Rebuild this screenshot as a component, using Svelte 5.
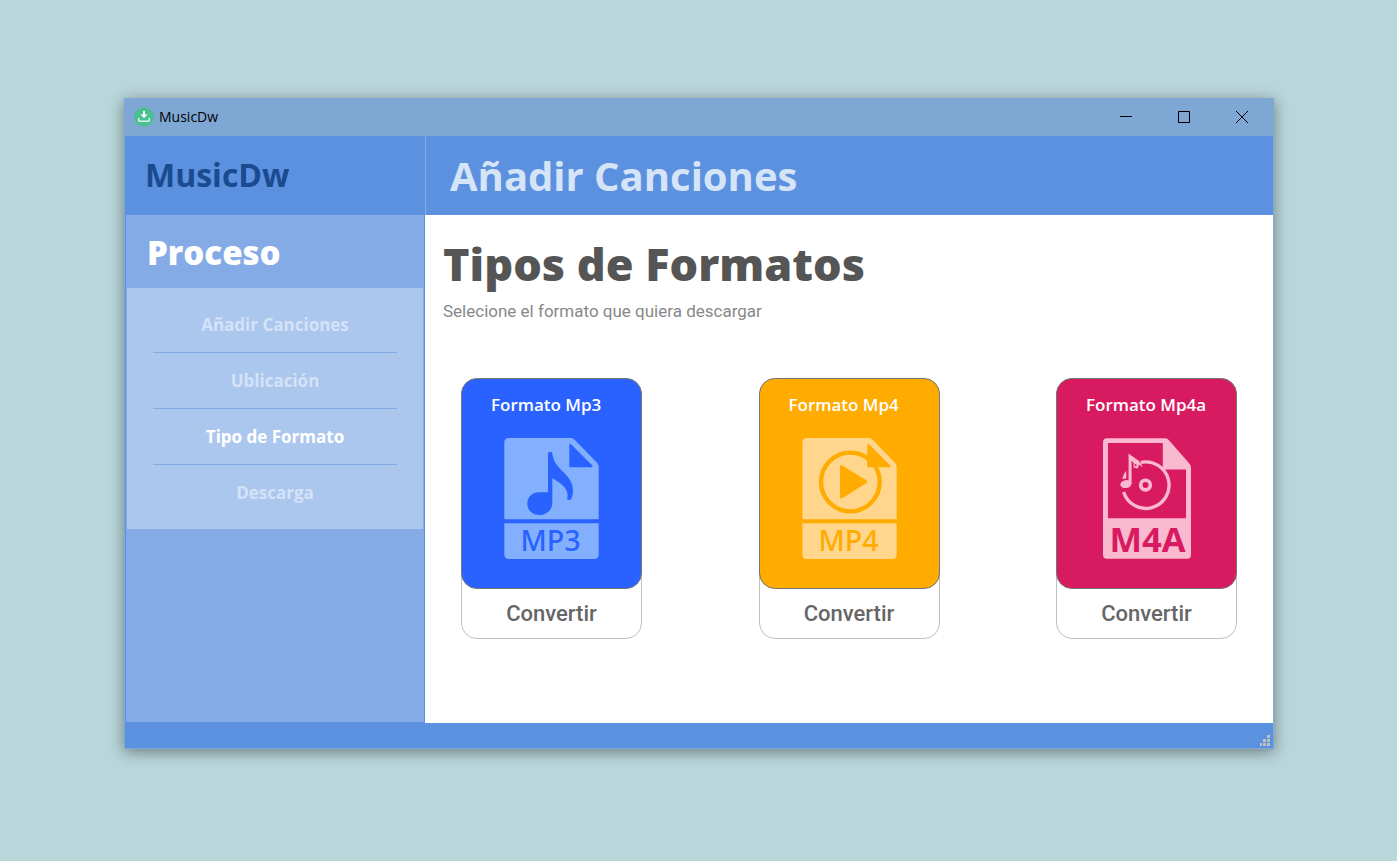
<script>
  const steps = ['Añadir Canciones', 'Ublicación', 'Tipo de Formato', 'Descarga'];
  let current = $state(2);

  const formats = [
    { id: 'mp3', label: 'Formato Mp3' },
    { id: 'mp4', label: 'Formato Mp4' },
    { id: 'm4a', label: 'Formato Mp4a' }
  ];
</script>

<div class="desktop">
  <div class="window">
    <div class="titlebar">
      <svg class="app-icon" viewBox="0 0 20 20" aria-hidden="true">
        <circle cx="10" cy="10" r="10" fill="#4bbf92" />
        <path d="M9 4h2v3.500h2.500L10 11 6.500 7.500H9z" fill="#fff" />
        <path d="M4.800 11.500v2.700h10.400v-2.700" fill="none" stroke="#d6f2e6" stroke-width="1.500" stroke-linecap="round" stroke-linejoin="round" />
      </svg>
      <span class="app-name">MusicDw</span>
      <div class="controls">
        <button aria-label="Minimizar">
          <svg viewBox="0 0 12 12"><path d="M0 5.500h12" /></svg>
        </button>
        <button aria-label="Maximizar">
          <svg viewBox="0 0 12 12"><path d="M.5.5h11v11H.5z" /></svg>
        </button>
        <button aria-label="Cerrar">
          <svg viewBox="0 0 12 12"><path d="M0 0l12 12M12 0L0 12" /></svg>
        </button>
      </div>
    </div>

    <header>
      <div class="brand">MusicDw</div>
      <div class="section">Añadir Canciones</div>
    </header>

    <div class="body">
      <aside>
        <h2>Proceso</h2>
        <nav>
          {#each steps as step, i}
            <button class:active={i === current} onclick={() => (current = i)}>{step}</button>
          {/each}
        </nav>
      </aside>

      <main>
        <h1>Tipos de Formatos</h1>
        <p>Selecione el formato que quiera descargar</p>
        <div class="cards">
          {#each formats as f}
            <article class="card">
              <div class="face {f.id}">
                <h3>{f.label}</h3>
                {#if f.id === 'm4a'}
                  <svg viewBox="0 0 265 363" width="88" height="121" aria-hidden="true">
                    <path class="paper" d="M12 0H188Q194 0 198 5L260 76Q265 82 265 90V351Q265 363 253 363H12Q0 363 0 351V12Q0 0 12 0Z" />
                    <path class="ink" d="M15 14H180V94H250V241H15Z" />
                    <path class="groove" d="M114 73A70 70 0 1 1 62 162" stroke-width="10" />
                    <circle class="groove" cx="128" cy="141" r="14.500" stroke-width="11" />
                    <ellipse class="paper" cx="69" cy="138" rx="17" ry="12" transform="rotate(-10 69 138)" />
                    <path class="paper" d="M77 46L101 63Q114 70 119 87L108 79Q108 86 104 91L92 88V74L86 68V138H77Z" />
                    <path class="paper" d="M58 123Q60 108 70 98V121Z" />
                    <path class="ink" d="M95 76L103 81L96 85Z" />
                    <text class="ink" x="134" y="342" text-anchor="middle" font-size="104" font-weight="700">M4A</text>
                  </svg>
                {:else}
                  <svg viewBox="0 0 283 363" width="95" height="121" aria-hidden="true">
                    <path class="paper" d="M14 0H200Q206 0 211 5L278 74Q283 79 283 87V244H0V14Q0 0 14 0Z" />
                    <path class="paper" d="M0 256H283V349Q283 363 269 363H14Q0 363 0 349Z" />
                    <path class="ink" d="M195 21Q195 15 200 19L263 82Q267 88 260 88H195Z" />
                    {#if f.id === 'mp3'}
                      <path class="ink" d="M131 48Q131 41 138 41Q143 41 144 48C151 99 206 106 206 159Q206 170 201 182Q199 187 193 186Q187 185 189 178C195 151 164 132 144 121V194C144 216 126 231 105 231C84 231 69 217 69 197C69 177 84 163 105 163H131Z" />
                      <text class="ink label" x="139" y="338" text-anchor="middle" font-size="86">MP3</text>
                    {:else}
                      <circle class="ring" cx="144" cy="132" r="88" />
                      <path class="ink" d="M113 87Q113 78 121 83L191 126Q198 131 191 136L121 180Q113 184 113 176Z" />
                      <text class="ink label" x="139" y="338" text-anchor="middle" font-size="86">MP4</text>
                    {/if}
                  </svg>
                {/if}
              </div>
              <button class="convert">Convertir</button>
            </article>
          {/each}
        </div>
      </main>
    </div>

    <footer>
      <svg width="11" height="11" viewBox="0 0 11 11" fill="#c0c0c0" aria-hidden="true">
        <path d="M8 0h3v3H8zM4 4h3v3H4zM8 4h3v3H8zM1 8h2v3H1zM4 8h3v3H4zM8 8h3v3H8z" />
      </svg>
    </footer>
  </div>
</div>

<style>
  .desktop {
    box-sizing: border-box;
    display: flex;
    min-height: 100vh;
    padding: 98px 123px 112px 124px;
    background: #b9d6da;
    font-family: 'Open Sans', 'Noto Sans', sans-serif;
  }
  .window {
    flex: 1;
    display: flex;
    flex-direction: column;
    border: 1px solid #7fa8d9;
    background: #5c91df;
    box-shadow: 0 3px 14px rgba(0, 0, 0, 0.42);
  }
  button {
    padding: 0;
    border: 0;
    background: none;
    font-family: inherit;
    cursor: pointer;
  }
  h1, h2, h3, p {
    margin: 0;
  }
  .titlebar {
    box-sizing: border-box;
    display: flex;
    align-items: center;
    height: 37px;
    padding: 0 2px 1px 9px;
    background: #7fa7d4;
  }
  .app-icon {
    width: 20px;
    height: 20px;
    margin-right: 5px;
  }
  .app-name {
    font-size: 14px;
    line-height: 20px;
  }
  .controls {
    display: flex;
    align-self: stretch;
    margin-left: auto;
  }
  .controls button {
    display: grid;
    place-items: center;
    width: 58px;
  }
  .controls svg {
    width: 12px;
    height: 12px;
    overflow: visible;
    fill: none;
    stroke: #000;
  }
  header {
    display: flex;
    height: 79px;
    font-weight: 700;
  }
  .brand {
    box-sizing: border-box;
    width: 301px;
    padding-left: 20px;
    border-right: 1px solid #84abe6;
    color: #1a4a90;
    font-size: 32px;
    line-height: 77px;
  }
  .section {
    padding-left: 24px;
    color: #d6e4f8;
    font-size: 40px;
    line-height: 79px;
  }
  .body {
    flex: 1;
    display: flex;
  }
  aside {
    box-sizing: border-box;
    width: 300px;
    padding: 0 1px;
    border: solid #5c91df;
    border-width: 0 1px 1px;
    background: #84abe6;
  }
  h2 {
    padding: 2px 0 0 20px;
    color: #fff;
    font-size: 33px;
    line-height: 71px;
    font-weight: 800;
  }
  nav {
    display: flex;
    flex-direction: column;
    padding: 9px 26px 8px;
    background: #acc7ee;
  }
  nav button {
    height: 56px;
    border-bottom: 1px solid #84abe6;
    color: #d4e2f7;
    font-size: 17px;
    font-weight: 700;
  }
  nav button:last-child {
    border-bottom-color: transparent;
  }
  nav button.active {
    color: #fff;
  }
  main {
    flex: 1;
    padding: 20px 36px 0 18px;
    background: #fff;
  }
  h1 {
    padding-bottom: 2px;
    color: #555;
    font-size: 45px;
    line-height: 58px;
    font-weight: 800;
  }
  p {
    color: #888;
    font-family: Roboto, sans-serif;
    font-size: 17px;
    line-height: 32px;
  }
  .cards {
    display: flex;
    justify-content: space-between;
    margin: 51px 0 0 18px;
  }
  .card {
    display: flex;
    flex-direction: column;
    box-sizing: border-box;
    width: 181px;
    border: 1px solid #c0c0c0;
    border-radius: 16px;
  }
  .face {
    display: flex;
    flex-direction: column;
    align-items: center;
    box-sizing: border-box;
    height: 211px;
    margin: -1px -1px 0;
    padding-top: 13px;
    border: 1px solid #777;
    border-radius: 16px;
    background: var(--ink);
  }
  .mp3 {
    --ink: #2962ff;
    --paper: #82b0ff;
  }
  .mp4 {
    --ink: #ffab00;
    --paper: #ffd68c;
  }
  .m4a {
    --ink: #d81b60;
    --paper: #f9b9cf;
  }
  h3 {
    align-self: flex-start;
    margin-bottom: 20px;
    padding-left: 29px;
    color: #fff;
    font-size: 17px;
    line-height: 26px;
    font-weight: 600;
  }
  .face svg {
    overflow: visible;
  }
  .label {
    font-family: 'Noto Sans', sans-serif;
    font-weight: 500;
  }
  .paper {
    fill: var(--paper);
  }
  .ink {
    fill: var(--ink);
  }
  .ring {
    fill: none;
    stroke: var(--ink);
    stroke-width: 13;
  }
  .groove {
    fill: none;
    stroke: var(--paper);
  }
  .convert {
    height: 49px;
    color: #666;
    font-family: Roboto, sans-serif;
    font-size: 22px;
    font-weight: 500;
  }
  footer {
    display: flex;
    justify-content: flex-end;
    align-items: flex-end;
    height: 25px;
    box-sizing: border-box;
    padding: 0 3px 2px;
  }
</style>
